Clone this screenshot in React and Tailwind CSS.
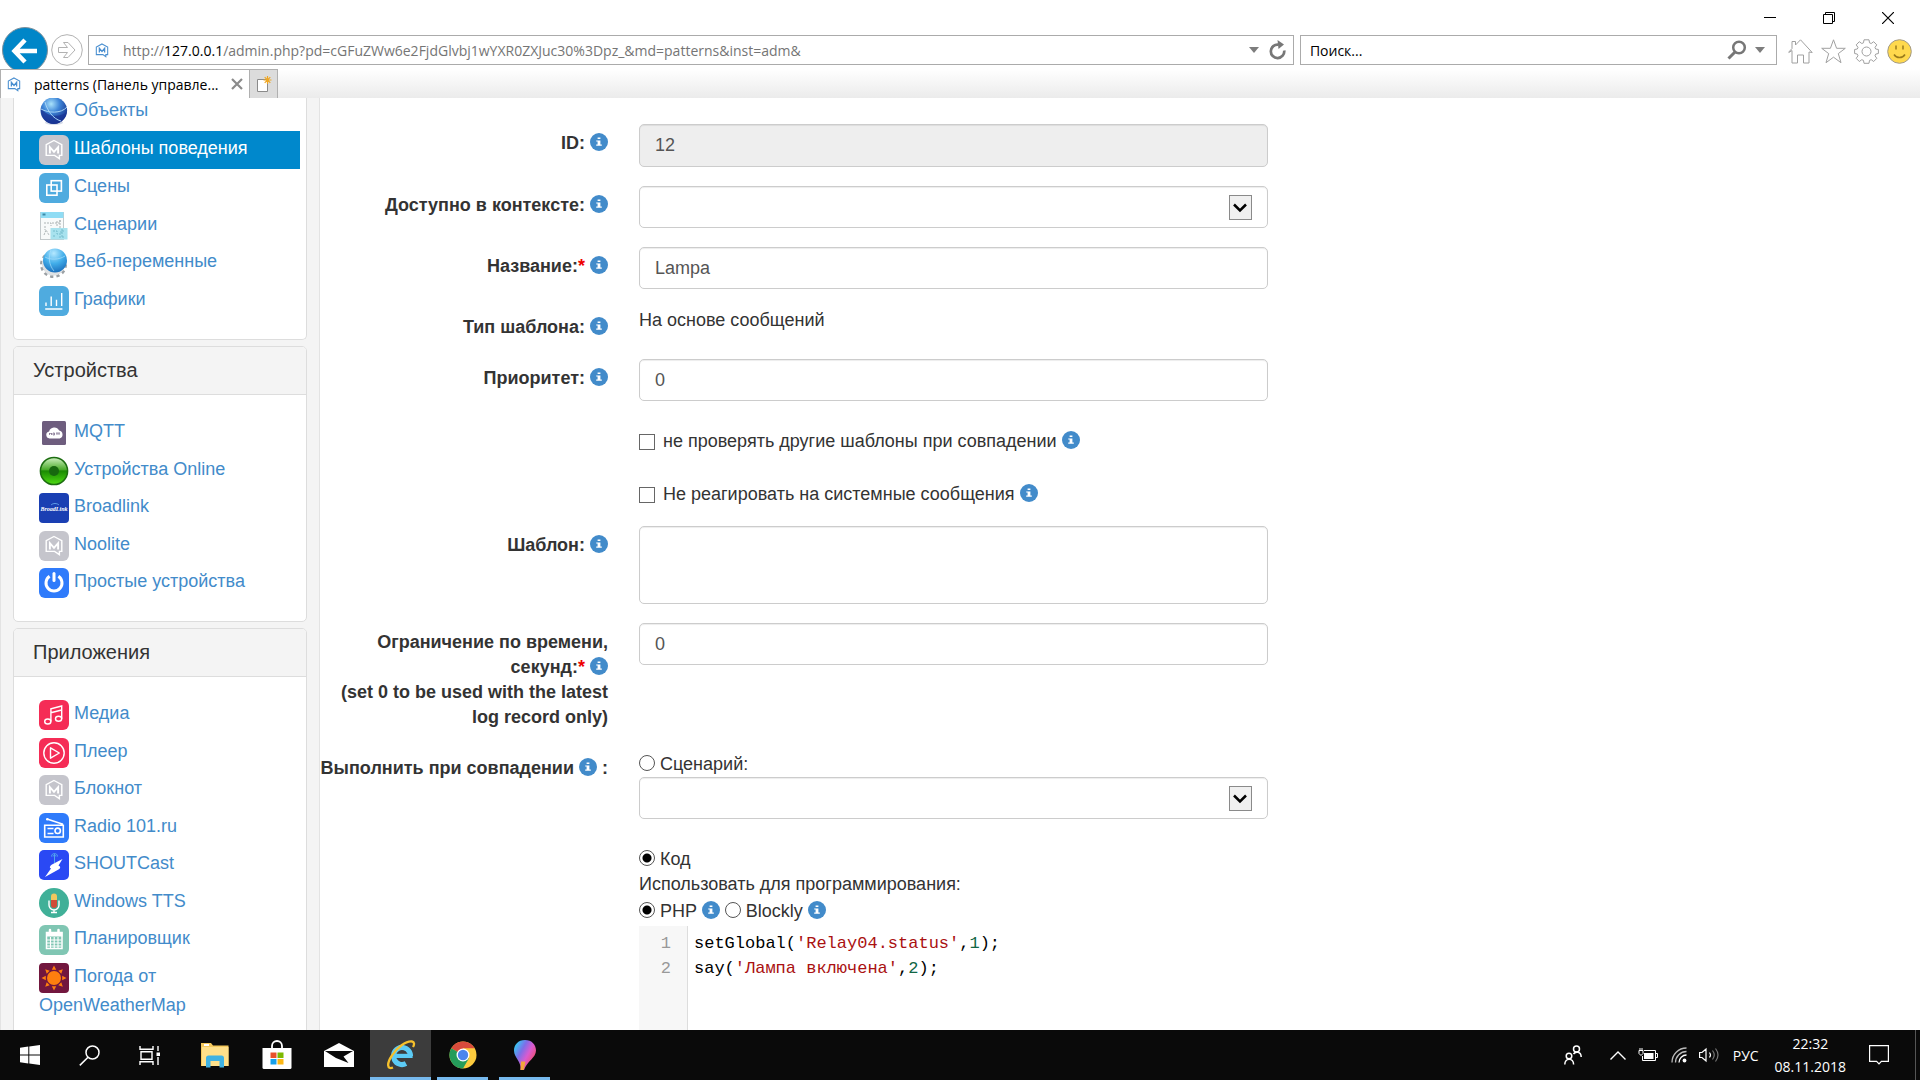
import React from "react";

const sans = "font-['Liberation_Sans',Arial,sans-serif]";
const ui = "font-['Open_Sans','Noto_Sans',sans-serif]";

/* ---------- small marks ---------- */

function HouseMark({ className, stroke }) {
  return (
    <svg viewBox="0 0 16 17" className={className} fill="none" stroke={stroke} strokeWidth="1.2" aria-hidden="true">
      <path d="M8 1 14.5 4.6V13.2H12.4V15.6L9 13.2H1.5V4.6Z" />
      <path d="M5 10.8V6l3 3.6L11 6v4.8" strokeWidth="1.5" />
    </svg>
  );
}

function Info() {
  return (
    <button type="button" aria-label="Справка" className="inline-block h-[18px] w-[18px] align-[-2px]">
      <svg viewBox="0 0 18 18" className="block h-full w-full" aria-hidden="true">
        <circle cx="9" cy="9" r="9" fill="#428bca" />
        <path d="M7.6 4.4h2.8v1.7H7.6zM6.2 7.4h4.2v4.2h1.4v1.2H6.2v-1.2h1.4V8.6H6.2z" fill="#fff" />
      </svg>
    </button>
  );
}

function Tile({ fill, children, rx = 6 }) {
  return (
    <svg viewBox="0 0 30 30" className="inline-block h-[30px] w-[30px] align-[-11px]" aria-hidden="true">
      <rect width="30" height="30" rx={rx} fill={fill} />
      {children}
    </svg>
  );
}

function Plain({ children }) {
  return (
    <svg viewBox="0 0 30 30" className="inline-block h-[30px] w-[30px] align-[-11px]" aria-hidden="true">
      {children}
    </svg>
  );
}

const white = { fill: "none", stroke: "#fff", strokeWidth: 1.4 };

const HouseTile = () => (
  <Tile fill="#c5c5cc">
    <path d="M15 5.5 22.8 9.6V20.4H20.4V23.6L15.6 20.4H7.2V9.6Z" {...white} />
    <path d="M10.9 18.6V12.2L15 16.8 19.1 12.2V18.6" {...white} strokeWidth="1.9" />
  </Tile>
);

const icons = {
  objects: (
    <Plain>
      <defs>
        <radialGradient id="orb" cx="0.4" cy="0.25" r="0.8">
          <stop offset="0" stopColor="#a9e2fb" />
          <stop offset="0.4" stopColor="#3f86d8" />
          <stop offset="1" stopColor="#0c1f7c" />
        </radialGradient>
      </defs>
      <ellipse cx="15" cy="25.5" rx="9" ry="2.5" fill="#d5dbe8" />
      <circle cx="14.8" cy="13.6" r="13.3" fill="url(#orb)" />
      <path d="M2 11C8 20 20 21 28 15C26 24 19 27 15 27C7 27 1 20 2 11Z" fill="#1a3697" opacity=".75" />
      <path d="M2 12C9 16 22 17 28 10M6 5C8 13 14 22 22 24" fill="none" stroke="#a6d4f6" strokeWidth="1" />
    </Plain>
  ),
  house: <HouseTile />,
  scenes: (
    <Tile fill="#4fabdf">
      <rect x="12.2" y="7.7" width="10.2" height="10.4" {...white} strokeWidth="1.6" />
      <rect x="7.8" y="12" width="10.2" height="10.2" {...white} strokeWidth="1.6" />
    </Tile>
  ),
  scripts: (
    <Plain>
      <rect x="1.5" y="1.5" width="23" height="27" fill="#f8fafa" stroke="#c3c9cb" />
      <rect x="1.5" y="1" width="23" height="6" fill="#8fdcf4" />
      <path d="M3.5 2.5h3v2h-3z" fill="#3a8aa9" />
      <path d="M5 12h7v3M13 12h8V9M6 15v4M5 24l2-5 3 5M18 10v6M21 9v8" fill="none" stroke="#a4abad" strokeWidth=".9" strokeDasharray="2 1" />
      <rect x="11.500" y="17" width="17" height="11.500" fill="#a8e2ee" />
      <path d="M14 20h4v3h4v-3h4M14 25h3M20 26h5M23 18v9" fill="none" stroke="#74bccc" strokeWidth="1" strokeDasharray="2 1" />
    </Plain>
  ),
  web: (
    <Plain>
      <defs>
        <radialGradient id="globe" cx="0.45" cy="0.2" r="0.85">
          <stop offset="0" stopColor="#b5e8ff" />
          <stop offset="0.5" stopColor="#42aeea" />
          <stop offset="1" stopColor="#1769b8" />
        </radialGradient>
      </defs>
      <circle cx="14.500" cy="16.500" r="12" fill="none" stroke="#9ba0a4" strokeWidth="3" strokeDasharray="3.2 3.1" />
      <circle cx="14.500" cy="16" r="11.500" fill="#dfe2e4" />
      <circle cx="16" cy="12.500" r="12" fill="url(#globe)" />
      <path d="M6 9c5 3 14 3 20-1M12 2c-3 7-2 15 3 21" fill="none" stroke="#a7defa" strokeWidth=".7" />
    </Plain>
  ),
  charts: (
    <Tile fill="#4fabdf">
      <path d="M6.200 23H23.400M7 20V16.400M12.200 20V10.600M17.500 20V13.800M22.700 20V7" {...white} />
    </Tile>
  ),
  mqtt: (
    <Plain>
      <rect x="3" y="3" width="24" height="24" rx="1.500" fill="#6e5d7e" />
      <path d="M10.500 20.500a3.600 3.600 0 0 1-.4-7.100 5.400 5.400 0 0 1 10-1 4.200 4.200 0 0 1 .6 8.100z" fill="#fff" />
      <path d="M10.500 17v-2l1 1 1-1v2M14 15h1.500v2H14zM17 15h4M18 15v2M20 15v2" fill="none" stroke="#6e5d7e" strokeWidth=".7" />
    </Plain>
  ),
  online: (
    <Plain>
      <defs>
        <linearGradient id="led" x1="0" y1="0" x2="0" y2="1">
          <stop offset="0" stopColor="#d2f2c4" />
          <stop offset="0.45" stopColor="#4aab2a" />
          <stop offset="0.5" stopColor="#1a8a02" />
          <stop offset="1" stopColor="#4fdc13" />
        </linearGradient>
      </defs>
      <circle cx="15" cy="15" r="13.600" fill="url(#led)" stroke="#1c6d10" strokeWidth="1.500" />
      <circle cx="15" cy="15" r="5" fill="#17680f" />
    </Plain>
  ),
  broadlink: (
    <Tile fill="#1a3fb3" rx={4}>
      <text x="15" y="17.500" textAnchor="middle" fontFamily="Liberation Serif, serif" fontStyle="italic" fontWeight="bold" fontSize="6" fill="#fff">
        BroadLink
      </text>
      <path d="M12 12c2-2 6-2 8 0" fill="none" stroke="#6fb4f2" strokeWidth=".8" />
    </Tile>
  ),
  power: (
    <Tile fill="#2f7bfb">
      <path d="M10.600 8.300a8 8 0 1 0 8.800 0" {...white} strokeWidth="3" />
      <path d="M15 5.500v7" {...white} strokeWidth="3" strokeLinecap="round" />
    </Tile>
  ),
  media: (
    <Tile fill="#f52c56">
      <ellipse cx="8.800" cy="21.500" rx="3.100" ry="2.500" {...white} />
      <ellipse cx="19.600" cy="18.800" rx="3.100" ry="2.500" {...white} />
      <path d="M11.900 21.500V8.700L22.700 6v12.800M11.900 12.700 22.700 10" {...white} />
    </Tile>
  ),
  player: (
    <Tile fill="#f52c56">
      <circle cx="15" cy="15" r="10.200" {...white} />
      <path d="M11.500 9.800v10.400L20.300 15z" {...white} strokeLinejoin="round" />
    </Tile>
  ),
  radio: (
    <Tile fill="#2f7bfb">
      <path d="M5.700 12.200H24.300V24H5.700ZM8 6l16 5.200M8.500 15.500h6M8.500 20.500h6" {...white} strokeWidth="1.600" />
      <circle cx="8.300" cy="6.200" r="1.300" fill="#fff" />
      <circle cx="18.700" cy="17.800" r="2.700" {...white} strokeWidth="1.600" />
    </Tile>
  ),
  shout: (
    <Tile fill="#2a49f4" rx={5}>
      <path d="M15.500 4v9M12.500 6.500c0-4 6-4 6 0M14 6.500c0-2 3-2 3 0" fill="none" stroke="#52a5ee" strokeWidth="1" />
      <path d="M23.500 9 13 14.500c-2 1.500-3 3-1 4L6 27l13.500-7.500c2.500-1.500 2-3 0-4z" fill="#fff" />
    </Tile>
  ),
  tts: (
    <Plain>
      <circle cx="15" cy="15" r="15" fill="#40b098" />
      <path d="M12 8.500a3 3 0 0 1 6 0V12h-6z" fill="#efc75e" />
      <path d="M12 12h6v5a3 3 0 0 1-6 0z" fill="#d04b38" />
      <path d="M10 12.500V17a5 5 0 0 0 10 0v-4.500M15 22v2.500M12 24.500h6" {...white} />
    </Plain>
  ),
  planner: (
    <Tile fill="#80c6b3">
      <path d="M7.500 7.500h15.500v16H7.500z" {...white} strokeWidth="1.500" />
      <path d="M7 7h16.500v4.500H7z" fill="#fff" />
      <path d="M11 5v3M19.500 5v3" stroke="#fff" strokeWidth="2.500" strokeLinecap="round" />
      <path d="M8 15h14.500M8 18h14.500M8 21h14.500M11.500 12v11.500M15.200 12v11.500M19 12v11.500" {...white} strokeWidth="1.100" />
    </Tile>
  ),
  weather: (
    <Tile fill="#72173e" rx={4}>
      <path
        d="M15 2.500l2.200 4.300h-4.400zM15 27.500l2.200-4.300h-4.400zM2.500 15l4.300-2.200v4.400zM27.500 15l-4.300-2.200v4.400zM6.200 6.200l4.500 1.500-3 3zM23.800 6.200l-1.500 4.500-3-3zM6.200 23.800l1.500-4.500 3 3zM23.800 23.800l-4.500-1.500 3-3z"
        fill="#ff7f0e"
      />
      <circle cx="15" cy="15" r="7" fill="#ff7f0e" />
    </Tile>
  ),
};

/* ---------- browser frame ---------- */

function Caret() {
  return (
    <svg viewBox="0 0 10 6" className="h-[6px] w-[10px]" aria-hidden="true">
      <path d="M0 0h10L5 6z" fill="#7d7d7d" />
    </svg>
  );
}

function BrowserHeader() {
  return (
    <header className={`shrink-0 bg-white ${ui} text-[14px] text-black`}>
      <div className="flex h-[27px] items-end justify-end gap-[47px] pr-[26px] pb-[3px]">
        <button type="button" aria-label="Свернуть">
          <svg viewBox="0 0 12 12" className="block h-3 w-3" stroke="#000"><path d="M0 5.500h12" /></svg>
        </button>
        <button type="button" aria-label="Восстановить">
          <svg viewBox="0 0 12 12" className="block h-3 w-3" fill="none" stroke="#000">
            <path d="M.5 2.500h9v9h-9zM2.500 2.500v-2h9v9h-2" />
          </svg>
        </button>
        <button type="button" aria-label="Закрыть">
          <svg viewBox="0 0 12 12" className="block h-3 w-3" stroke="#000" strokeWidth="1.200"><path d="M0 0l12 12M12 0L0 12" /></svg>
        </button>
      </div>

      <div className="flex h-[42px] items-start overflow-hidden pr-2 pl-[2px]">
        <button type="button" aria-label="Назад" className="shrink-0">
          <svg viewBox="0 0 46 46" className="block h-[46px] w-[46px]" fill="none">
            <circle cx="23" cy="23" r="22.500" fill="#0086c8" stroke="#7e8f9a" />
            <path d="M35 24H12M23 13 12.500 24 23 35" stroke="#fff" strokeWidth="4.500" />
          </svg>
        </button>
        <button type="button" aria-label="Вперёд" className="mt-[7px] ml-[3px] shrink-0">
          <svg viewBox="0 0 32 32" className="block h-8 w-8" fill="none" stroke="#b2b2b2">
            <circle cx="16" cy="16" r="15.300" />
            <path d="M7.500 13.500h9l-4-5h4.500L24 16l-7 7.500h-4.500l4-5h-9z" />
          </svg>
        </button>
        <div className="mt-2 ml-[5px] flex h-[30px] min-w-0 flex-[1189] items-center border border-[#ababab] px-[6px]">
          <HouseMark className="h-[15px] w-[14px] shrink-0" stroke="#4a8fd0" />
          <div role="textbox" aria-label="Адрес" className="ml-[14px] min-w-0 flex-1 truncate text-[#757575]">
            http://<span className="text-black">127.0.0.1</span>/admin.php?pd=cGFuZWw6e2FjdGlvbj1wYXR0ZXJuc30%3Dpz_&amp;md=patterns&amp;inst=adm&amp;
          </div>
          <button type="button" aria-label="Показать адреса"><Caret /></button>
          <button type="button" aria-label="Обновить" className="ml-[10px]">
            <svg viewBox="0 0 18 20" className="block h-5 w-[18px]" fill="none">
              <path d="M15.200 10.500A6.700 6.700 0 1 1 9.500 4.700" stroke="#777" strokeWidth="2.700" />
              <path d="M8.500 0 15 4.500 9.500 9z" fill="#777" />
            </svg>
          </button>
        </div>
        <form role="search" className="mt-2 ml-[6px] flex h-[30px] min-w-0 flex-[454] items-center border border-[#ababab] pr-[11px] pl-[9px]">
          <input aria-label="Поиск" placeholder="Поиск..." className="min-w-0 flex-1 bg-transparent outline-none placeholder:text-black" />
          <button type="button" aria-label="Найти">
            <svg viewBox="0 0 20 20" className="block h-5 w-5" fill="none" stroke="#777">
              <circle cx="12" cy="7.500" r="5.800" strokeWidth="2.500" />
              <path d="M8 12 1.500 18.500" strokeWidth="3" />
            </svg>
          </button>
          <button type="button" aria-label="Параметры поиска" className="ml-2"><Caret /></button>
        </form>
        <div className="mt-3 ml-[11px] flex shrink-0 gap-2">
          <button type="button" aria-label="Домой">
            <svg viewBox="0 0 25 25" className="block h-[25px] w-[25px]" fill="#fff" stroke="#a0a0a0">
              <path d="M4 11.500.8 13.500.8 13 4 9.500V2.500h3.500V6L12.500.8l11.700 12.700L21 13V24h-5.500v-8h-6v8H4z" />
            </svg>
          </button>
          <button type="button" aria-label="Избранное">
            <svg viewBox="0 0 25 25" className="block h-[25px] w-[25px]" fill="#fff" stroke="#a0a0a0">
              <path d="M12.500.8l3.100 8.500h8.700l-7 5.300 2.700 9.100-7.500-5.500L5 23.700l2.700-9.100-7-5.300h8.700z" />
            </svg>
          </button>
          <button type="button" aria-label="Сервис">
            <svg viewBox="0 0 25 25" className="block h-[25px] w-[25px]" fill="#fff" stroke="#a0a0a0">
              <path d="M10 .8h5l.5 3 1.700.7 2.500-1.800 3.100 3.200-1.800 2.500.7 1.600 2.700.5v4l-2.700.6-.7 1.700 1.800 2.500-3.100 3.200-2.500-1.800-1.700.7-.5 2.900h-5l-.5-2.900-1.700-.7-2.500 1.800-3.100-3.200L4 16.800l-.7-1.700-2.700-.6v-4l2.700-.5L4 8.400 2.200 5.900l3.100-3.200 2.500 1.800 1.700-.7z" />
              <circle cx="12.500" cy="12.500" r="4.500" />
            </svg>
          </button>
          <button type="button" aria-label="Отзыв">
            <svg viewBox="0 0 25 25" className="block h-[25px] w-[25px]">
              <circle cx="12.500" cy="12.500" r="11.800" fill="#ffd94d" stroke="#a39a86" />
              <path d="M9 6.500v4M16 6.500v4M7 15.500c2.500 4 8.500 4 11 0" fill="none" stroke="#9a7b1c" strokeWidth="1.500" />
            </svg>
          </button>
        </div>
      </div>

      <div className="flex h-[29px] bg-gradient-to-b from-white to-[#ebebeb]">
        <div className="flex w-[250px] items-center border-t border-r border-l border-[#b0b0b0] bg-white pr-[6px] pl-[6px]">
          <HouseMark className="h-[15px] w-[14px] shrink-0" stroke="#4a8fd0" />
          <span className="ml-[13px] min-w-0 flex-1 whitespace-nowrap">patterns (Панель управле...</span>
          <button type="button" aria-label="Закрыть вкладку">
            <svg viewBox="0 0 12 12" className="block h-3 w-3" stroke="#8b8b8b" strokeWidth="2.200"><path d="M1 1l10 10M11 1L1 11" /></svg>
          </button>
        </div>
        <button type="button" aria-label="Новая вкладка" className="flex w-7 items-center justify-center border-t border-r border-[#b0b0b0] bg-[#dcdcdc]">
          <svg viewBox="0 0 16 17" className="h-[17px] w-4">
            <path d="M1.500 3.500h10v12h-10z" fill="#fff" stroke="#8a8a8a" />
            <path d="M11.500 0v8M7.500 4h8M8.700 1.200l5.600 5.600M14.300 1.200 8.700 6.800" stroke="#f0a722" strokeWidth="1.200" />
          </svg>
        </button>
      </div>
    </header>
  );
}

/* ---------- sidebar ---------- */

function Panel({ title, items, className = "" }) {
  return (
    <section className={`mb-[6px] rounded-[5px] border border-[#ddd] bg-white ${className}`}>
      {title && (
        <h2 className="h-12 rounded-t-[4px] border-b border-[#ddd] bg-[#f4f4f4] px-[19px] text-[20px] leading-[47px] text-[#333]">{title}</h2>
      )}
      <ul className={title ? "px-[6px] py-[19px]" : "px-[6px] pb-[20px]"}>
        {items.map(([icon, text, active]) => (
          <li key={text} className="odd:min-h-[38px] even:min-h-[37px]">
            <a
              href="#"
              className={
                active
                  ? "block h-[38px] bg-[#08c] px-[19px] pt-1 text-[18px] leading-[25px] text-white"
                  : "block px-[19px] pt-1 text-[18px] leading-[25px] text-[#428bca]"
              }
            >
              {icons[icon]} {text}
            </a>
          </li>
        ))}
      </ul>
    </section>
  );
}

function Sidebar() {
  return (
    <nav className="w-1/6 shrink-0 overflow-hidden border-r border-l border-[#e3e3e3] bg-[#f4f4f4] px-3">
      <Panel
        className="-mt-[5px] rounded-t-none border-t-0"
        items={[
          ["objects", "Объекты"],
          ["house", "Шаблоны поведения", true],
          ["scenes", "Сцены"],
          ["scripts", "Сценарии"],
          ["web", "Веб-переменные"],
          ["charts", "Графики"],
        ]}
      />
      <Panel
        title="Устройства"
        items={[
          ["mqtt", "MQTT"],
          ["online", "Устройства Online"],
          ["broadlink", "Broadlink"],
          ["house", "Noolite"],
          ["power", "Простые устройства"],
        ]}
      />
      <Panel
        title="Приложения"
        items={[
          ["media", "Медиа"],
          ["player", "Плеер"],
          ["house", "Блокнот"],
          ["radio", "Radio 101.ru"],
          ["shout", "SHOUTCast"],
          ["tts", "Windows TTS"],
          ["planner", "Планировщик"],
          ["weather", "Погода от OpenWeatherMap"],
        ]}
      />
    </nav>
  );
}

/* ---------- form ---------- */

const grid = "grid grid-cols-[18%_39.3%] gap-x-[31px]";
const field =
  "block w-full rounded-[5px] border border-[#ccc] px-[15px] text-[#555] shadow-[inset_0_1px_1px_rgba(0,0,0,0.075)] outline-none";
const radio =
  "h-4 w-4 appearance-none rounded-full border border-[#555] bg-white align-[-1px] checked:bg-[radial-gradient(circle,#000_4px,transparent_5px)]";

function Row({ id, label, required, children }) {
  return (
    <div className={`mb-[19px] ${grid}`}>
      <div className="pt-[7px] text-right font-bold">
        {label && (
          <>
            <label htmlFor={id}>{label}</label>
            {required && <span className="text-[#e00]">*</span>} <Info />
          </>
        )}
      </div>
      <div>{children}</div>
    </div>
  );
}

function SelectBox({ id, label }) {
  return (
    <div className="relative">
      <select id={id} aria-label={label} className={`${field} h-[42px] appearance-none bg-white`} />
      <span className="pointer-events-none absolute top-[9px] right-4 flex h-[25px] w-[23px] items-center justify-center border border-[#8a8a8a] bg-[#f0f0f0]">
        <svg viewBox="0 0 14 10" className="h-[10px] w-[14px]" fill="none" stroke="#000" strokeWidth="2.500" aria-hidden="true">
          <path d="M1 1.500l6 6 6-6" />
        </svg>
      </span>
    </div>
  );
}

function Check({ id, children }) {
  return (
    <div className="pt-[9px]">
      <input id={id} type="checkbox" className="h-4 w-4 appearance-none border border-[#666] bg-white align-[-3px]" />
      <label htmlFor={id} className="ml-2">{children}</label> <Info />
    </div>
  );
}

function CodeEditor() {
  return (
    <div className="flex h-[140px] font-['Liberation_Mono','Courier_New',monospace] text-[17px] leading-[25px] text-black">
      <div className="w-[49px] border-r border-[#ddd] bg-[#f7f7f7] pt-[5px] pr-4 text-right text-[#999]">
        <div>1</div>
        <div>2</div>
      </div>
      <div role="textbox" aria-multiline="true" aria-label="Код" className="flex-1 whitespace-pre pt-[5px] pl-[6px]">
        <div>setGlobal(<span className="text-[#a11]">'Relay04.status'</span>,<span className="text-[#164]">1</span>);</div>
        <div>say(<span className="text-[#a11]">'Лампа включена'</span>,<span className="text-[#164]">2</span>);</div>
      </div>
    </div>
  );
}

function PatternForm() {
  return (
    <main className="min-w-0 flex-1 overflow-hidden bg-white pt-[26px] text-[18px] leading-[25px] text-[#333]">
      <Row id="rec-id" label="ID:">
        <input id="rec-id" disabled defaultValue="12" className={`${field} h-[43px] bg-[#eee]`} />
      </Row>
      <Row id="context" label="Доступно в контексте:">
        <SelectBox id="context" label="Доступно в контексте" />
      </Row>
      <Row id="title" label="Название:" required>
        <input id="title" defaultValue="Lampa" className={`${field} h-[42px]`} />
      </Row>
      <Row label="Тип шаблона:">На основе сообщений</Row>
      <Row id="priority" label="Приоритет:">
        <input id="priority" defaultValue="0" className={`${field} h-[42px]`} />
      </Row>
      <Row>
        <Check id="is-last">не проверять другие шаблоны при совпадении</Check>
      </Row>
      <Row>
        <Check id="skip-system">Не реагировать на системные сообщения</Check>
      </Row>
      <Row id="pattern" label="Шаблон:">
        <textarea id="pattern" className={`${field} h-[78px] resize-none`} />
      </Row>
      <div className={`mb-[19px] ${grid}`}>
        <div className="pt-[7px] text-right font-bold">
          <label htmlFor="time-limit">
            Ограничение по времени,<br />секунд:
          </label>
          <span className="text-[#e00]">*</span> <Info />
          <br />
          (set 0 to be used with the latest<br />log record only)
        </div>
        <div>
          <input id="time-limit" defaultValue="0" className={`${field} h-[42px]`} />
        </div>
      </div>
      <div className={grid}>
        <div className="pt-[7px] text-right font-bold whitespace-nowrap">
          Выполнить при совпадении <Info /> :
        </div>
        <div className="pt-[3px]">
          <div>
            <input id="run-script" name="run" type="radio" className={radio} /> <label htmlFor="run-script">Сценарий:</label>
          </div>
          <SelectBox id="script" label="Сценарий" />
          <div className="mt-[28px]">
            <input id="run-code" name="run" type="radio" defaultChecked className={radio} /> <label htmlFor="run-code">Код</label>
          </div>
          <div>Использовать для программирования:</div>
          <div className="leading-[29px]">
            <input id="lang-php" name="lang" type="radio" defaultChecked className={radio} /> <label htmlFor="lang-php">PHP</label> <Info />{" "}
            <input id="lang-blockly" name="lang" type="radio" className={radio} /> <label htmlFor="lang-blockly">Blockly</label> <Info />
          </div>
          <CodeEditor />
        </div>
      </div>
    </main>
  );
}

/* ---------- taskbar ---------- */

function Task({ label, active, running, children }) {
  return (
    <button
      type="button"
      aria-label={label}
      className={
        active
          ? "flex w-[61px] items-center justify-center border-b-[3px] border-[#76b9ed] bg-[#3c3c3c] pt-[3px]"
          : running
            ? "mr-[5px] ml-[6px] flex w-[51px] items-center justify-center border-b-[3px] border-[#76b9ed] pt-[3px]"
            : "flex w-[62px] items-center justify-center"
      }
    >
      {children}
    </button>
  );
}

function Taskbar() {
  return (
    <footer className={`flex h-[50px] shrink-0 bg-[#0a0a0a] text-white ${ui}`}>
      <div className="flex w-[184px] items-center justify-between pr-6 pl-5">
        <button type="button" aria-label="Пуск">
          <svg viewBox="0 0 20 20" className="block h-5 w-5" fill="#fff">
            <path d="M0 2.800 8.300 1.600V9.500H0zM9.300 1.500 20 0v9.500H9.300zM0 10.500h8.300v7.900L0 17.200zM9.300 10.500H20V20L9.300 18.500z" />
          </svg>
        </button>
        <button type="button" aria-label="Поиск">
          <svg viewBox="0 0 21 21" className="block h-[21px] w-[21px]" fill="none" stroke="#fff" strokeWidth="1.500">
            <circle cx="13.500" cy="7.500" r="6.500" />
            <path d="M9 12.200.8 20.400" />
          </svg>
        </button>
        <button type="button" aria-label="Представление задач">
          <svg viewBox="0 0 21 21" className="block h-[21px] w-[21px]" fill="none" stroke="#fff" strokeWidth="1.400">
            <path d="M1 1v3.300h13V1M1 20v-3.300h13V20M2 6.800h11v7.400H2zM19 1v5M19 12v8" />
            <path d="M17.500 7.500h3.500v3.500h-3.500z" fill="#fff" stroke="none" />
          </svg>
        </button>
      </div>
      <Task label="Проводник">
        <svg viewBox="0 0 28 26" className="h-[26px] w-7">
          <path d="M0 1h10l2 2.500h15.500V24H0z" fill="#f5c95c" />
          <path d="M1 5h26.500v19H1z" fill="#ffe08a" />
          <path d="M3 2h5v2H3z" fill="#fff" />
          <path d="M5 25.500V16q0-2.500 2.500-2.500h13Q23 13.500 23 16v9.500h-4.500V19h-9v6.500z" fill="#3fb2e3" />
        </svg>
      </Task>
      <Task label="Магазин">
        <svg viewBox="0 0 30 30" className="h-[30px] w-[30px]">
          <path d="M10 9V6a5 5 0 0 1 10 0v3" fill="none" stroke="#fff" strokeWidth="1.800" />
          <path d="M.5 8h29v19.500q0 1.500-1.500 1.500H2Q.5 29 .5 27.500z" fill="#fff" />
          <path d="M8.500 12.500h6v5.500h-6z" fill="#e8522b" />
          <path d="M15.500 12.500h6v5.500h-6z" fill="#7db900" />
          <path d="M8.500 19h6v5.500h-6z" fill="#17a0ea" />
          <path d="M15.500 19h6v5.500h-6z" fill="#fcb714" />
        </svg>
      </Task>
      <Task label="Почта">
        <svg viewBox="0 0 30 24" className="h-6 w-[30px]">
          <path d="M0 8 15 0l15 8v16H0z" fill="#fff" />
          <path d="M1 8h28l-9.500 5.500 5 6.500L12 15z" fill="#0a0a0a" />
        </svg>
      </Task>
      <Task label="Internet Explorer" active>
        <svg viewBox="0 0 30 30" className="h-[30px] w-[30px]" fill="none">
          <circle cx="16" cy="16" r="8.500" stroke="#5ccbf5" strokeWidth="5.200" strokeDasharray="44 9.400" transform="rotate(62 16 16)" />
          <path d="M8 13.800h18.600v4.200H8z" fill="#5ccbf5" />
          <path d="M7 27.500c-6 2.500-6.500-4-1-12C11 7.500 20 .8 26 1.500c2.500.3 2.500 3 1 5.500" stroke="#f6c12c" strokeWidth="2.300" />
        </svg>
      </Task>
      <Task label="Google Chrome" running>
        <svg viewBox="0 0 28 28" className="h-7 w-7">
          <circle cx="14" cy="14" r="13.500" fill="#fccb3e" />
          <path d="M14 14 2.300 7.250A13.500 13.500 0 0 1 25.700 7.250H14z" fill="#d84b3c" />
          <path d="M14 14 2.300 7.250A13.500 13.500 0 0 0 14 27.500L19.800 17.400z" fill="#259c5b" />
          <circle cx="14" cy="14" r="6.500" fill="#fff" />
          <circle cx="14" cy="14" r="5.200" fill="#4a86ee" />
        </svg>
      </Task>
      <Task label="Paint 3D" running>
        <svg viewBox="0 0 24 30" className="h-[30px] w-6">
          <defs>
            <linearGradient id="paint" x1="0.100" y1="0.100" x2="0.900" y2="0.700">
              <stop offset="0" stopColor="#36c8f3" />
              <stop offset="0.350" stopColor="#7d6ee8" />
              <stop offset="0.650" stopColor="#d95bd0" />
              <stop offset="1" stopColor="#f0506e" />
            </linearGradient>
          </defs>
          <path d="M12 0c7 0 11 5 11 10.500C23 18 14 21 11 30H7.500C9 22 1 18 1 10.500 1 5 5 0 12 0z" fill="url(#paint)" />
          <path d="M8 21.500h4.500L10.500 30H7.500z" fill="#f3a63a" />
        </svg>
      </Task>

      <div className="ml-auto flex items-center">
        <button type="button" aria-label="Люди" className="mr-7">
          <svg viewBox="0 0 18 20" className="block h-5 w-[18px]" fill="none" stroke="#fff" strokeWidth="1.500">
            <circle cx="12.500" cy="4" r="3" />
            <circle cx="5" cy="11" r="2.800" />
            <path d="M.8 19.500c0-7 8.800-7 8.800 0M9.500 9c2-3 7.500-2.500 7.700 3" />
          </svg>
        </button>
        <button type="button" aria-label="Скрытые значки" className="mr-3">
          <svg viewBox="0 0 16 9" className="block h-[9px] w-4" fill="none" stroke="#fff" strokeWidth="1.400"><path d="M.5 8.500 8 1l7.500 7.500" /></svg>
        </button>
        <button type="button" aria-label="Батарея" className="mr-[13px]">
          <svg viewBox="0 0 20 14" className="block h-[14px] w-5" fill="none" stroke="#fff">
            <path d="M6 2.500h11.500v10h-13V8M18 5.500h1.500v4H18M1 2.500h4v3L3 7.500 1 5.500zM2 0v2M4 0v2" />
            <path d="M6 5h9.500v6H6z" fill="#fff" stroke="none" />
          </svg>
        </button>
        <button type="button" aria-label="Сеть" className="mr-3">
          <svg viewBox="0 0 16 16" className="block h-4 w-4" fill="none" strokeWidth="1.300">
            <path d="M1 15.500C1 7.500 7.500 1 15.500 1M4.500 15.500c0-6 5-11 11-11" stroke="#bbb" />
            <path d="M8 15.500C8 11.400 11.400 8 15.500 8" stroke="#fff" />
            <circle cx="13.500" cy="13.500" r="1.900" fill="#fff" />
          </svg>
        </button>
        <button type="button" aria-label="Громкость" className="mr-[14px]">
          <svg viewBox="0 0 20 18" className="block h-[18px] w-5" fill="none" stroke="#fff" strokeWidth="1.200">
            <path d="M.6 6.500H3L7 3v12l-4-3.500H.6zM10.500 6.500q2 2.500 0 5" />
            <path d="M13.500 4.500q3.500 4.500 0 9M16.500 2.500q5 6.500 0 13" stroke="#777" />
          </svg>
        </button>
        <button type="button" className="mr-4 text-[14px]">РУС</button>
        <button type="button" className="mr-[23px] text-center text-[14px] leading-[23px]">
          <time className="block">22:32</time>
          <time className="block">08.11.2018</time>
        </button>
        <button type="button" aria-label="Уведомления">
          <svg viewBox="0 0 20 20" className="block h-5 w-5" fill="none" stroke="#fff" strokeWidth="1.200">
            <path d="M.6.6h18.800v15.800h-7L10 18.800 7.600 16.400h-7z" />
          </svg>
        </button>
        <div className="mr-1 ml-[26px] h-[50px] w-px bg-[#555]" />
      </div>
    </footer>
  );
}

export default function App() {
  return (
    <div className={`flex h-screen flex-col overflow-hidden bg-white ${sans}`}>
      <BrowserHeader />
      <div className="flex min-h-0 flex-1">
        <Sidebar />
        <PatternForm />
      </div>
      <Taskbar />
    </div>
  );
}
